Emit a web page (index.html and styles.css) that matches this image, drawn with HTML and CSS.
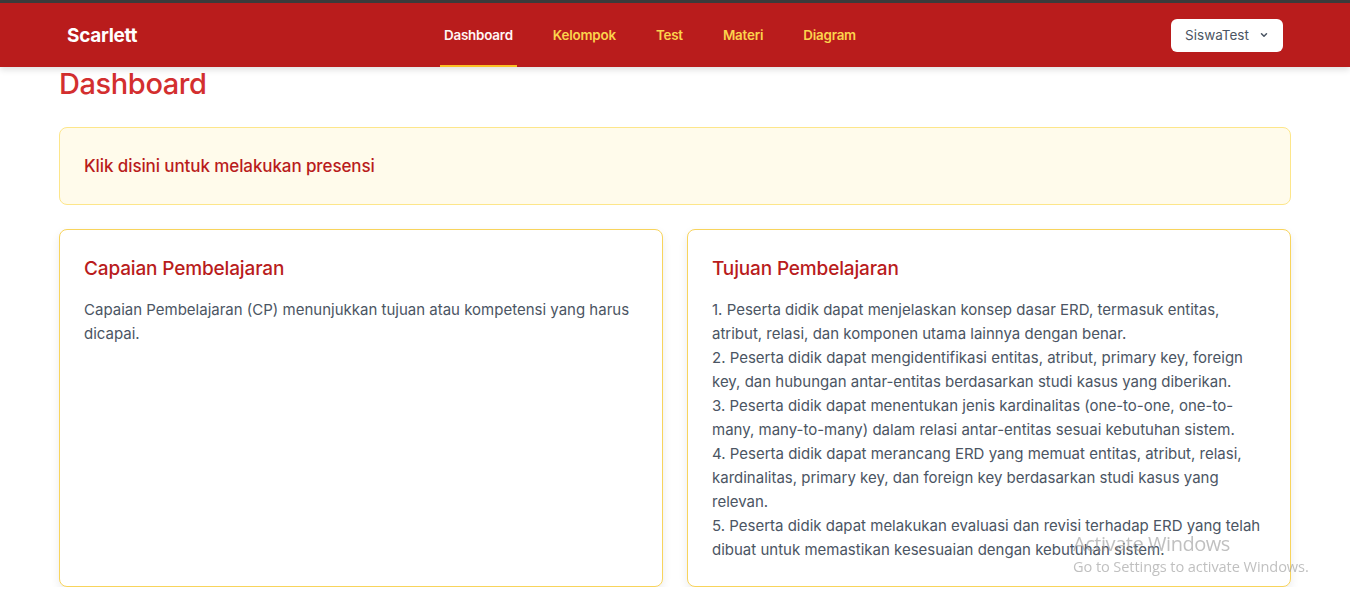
FILE: index.html
```html
<!DOCTYPE html>
<html lang="id">
<head>
<meta charset="utf-8">
<title>Dashboard - Scarlett</title>
<link rel="stylesheet" href="styles.css">
</head>
<body>
<div class="topline"></div>
<header class="navbar">
  <div class="brand">Scarlett</div>
  <nav class="nav">
    <a class="nav-link active" href="#">Dashboard</a>
    <a class="nav-link" href="#">Kelompok</a>
    <a class="nav-link" href="#">Test</a>
    <a class="nav-link" href="#">Materi</a>
    <a class="nav-link" href="#">Diagram</a>
  </nav>
  <button class="user-btn">SiswaTest
    <svg class="chev" width="10" height="10" viewBox="0 0 10 10"><path d="M2.5 3.8 L5 6.3 L7.5 3.8" fill="none" stroke="#4b5563" stroke-width="1.5" stroke-linecap="round" stroke-linejoin="round"/></svg>
  </button>
</header>
<main class="container">
  <h1 class="page-title">Dashboard</h1>
  <a class="alert" href="#">Klik disini untuk melakukan presensi</a>
  <div class="cards">
    <section class="card">
      <h2 class="card-title">Capaian Pembelajaran</h2>
      <p class="card-text">Capaian Pembelajaran (CP) menunjukkan tujuan atau kompetensi yang harus dicapai.</p>
    </section>
    <section class="card">
      <h2 class="card-title">Tujuan Pembelajaran</h2>
      <p class="card-text">1. Peserta didik dapat menjelaskan konsep dasar ERD, termasuk entitas, atribut, relasi, dan komponen utama lainnya dengan benar.<br>2. Peserta didik dapat mengidentifikasi entitas, atribut, primary key, foreign key, dan hubungan antar-entitas berdasarkan studi kasus yang diberikan.<br>3. Peserta didik dapat menentukan jenis kardinalitas (one-to-one, one-to-many, many-to-many) dalam relasi antar-entitas sesuai kebutuhan sistem.<br>4. Peserta didik dapat merancang ERD yang memuat entitas, atribut, relasi, kardinalitas, primary key, dan foreign key berdasarkan studi kasus yang relevan.<br>5. Peserta didik dapat melakukan evaluasi dan revisi terhadap ERD yang telah dibuat untuk memastikan kesesuaian dengan kebutuhan sistem.</p>
    </section>
  </div>
</main>
<div class="watermark">
  <div class="wm-title">Activate Windows</div>
  <div class="wm-sub">Go to Settings to activate Windows.</div>
</div>
</body>
</html>
```
FILE: styles.css
```css
* { box-sizing: border-box; }
html, body { margin: 0; padding: 0; }
body {
  font-family: "Inter", "Roboto", sans-serif;
  background: #ffffff;
  color: #4b5563;
  overflow: hidden;
}
.topline { height: 3px; background: #3c3c3c; }
.navbar {
  height: 64px;
  background: #b91c1c;
  display: flex;
  align-items: center;
  padding: 0 67px;
  box-shadow: 0 3px 6px rgba(0,0,0,0.12);
  position: relative;
}
.brand {
  color: #fff;
  font-weight: 700;
  font-size: 19px;
  letter-spacing: -0.3px;
  width: 373px;
}
.nav { display: flex; height: 64px; }
.nav-link {
  display: flex;
  align-items: center;
  padding: 0 4px;
  margin-right: 32px;
  height: 64px;
  font-size: 13.4px;
  font-weight: 600;
  letter-spacing: -0.2px;
  color: #fcd34d;
  text-decoration: none;
  border-bottom: 2px solid transparent;
  padding-top: 2px;
}
.nav-link.active { color: #fff5f5; border-bottom-color: #fbbf24; }
.user-btn {
  margin-left: auto;
  background: #fff;
  border: none;
  border-radius: 6px;
  height: 33px;
  width: 112px;
  display: flex;
  align-items: center;
  justify-content: center;
  gap: 10px;
  font-family: "Inter", sans-serif;
  font-size: 13.5px;
  color: #4b5563;
}
.container { padding: 0 59px; }
.page-title {
  margin: 1px 0 27px;
  font-size: 29px;
  font-weight: 500;
  color: #d32f2f;
  line-height: 32px;
  letter-spacing: -0.4px;
}
.alert {
  display: block;
  background: #fffbeb;
  border: 1px solid #fde68a;
  border-radius: 8px;
  height: 78px;
  padding: 0 24px;
  line-height: 76px;
  color: #b91c1c;
  font-weight: 500;
  font-size: 17px;
  letter-spacing: -0.1px;
  text-decoration: none;
}
.cards {
  display: grid;
  grid-template-columns: 1fr 1fr;
  gap: 24px;
  margin-top: 24px;
}
.card {
  height: 358px;
  border: 1px solid #f8d45c;
  border-radius: 8px;
  padding: 26px 24px;
  box-shadow: 0 4px 10px rgba(0,0,0,0.08);
  background: #fff;
}
.card-title {
  margin: 0 0 16px;
  font-size: 19px;
  font-weight: 500;
  color: #b91c1c;
  line-height: 26px;
  letter-spacing: -0.15px;
}
.card-text {
  margin: 0;
  font-size: 15px;
  line-height: 24px;
  color: #4b5563;
}
.watermark {
  position: fixed;
  left: 1073px;
  top: 532px;
  color: rgba(150,150,150,0.6);
  font-family: "Open Sans", sans-serif;
  pointer-events: none;
}
.wm-title { font-size: 20px; line-height: 24px; font-weight: 400; letter-spacing: -0.45px; }
.wm-sub { font-size: 14.6px; line-height: 18px; margin-top: 1px; letter-spacing: -0.1px; }
```
